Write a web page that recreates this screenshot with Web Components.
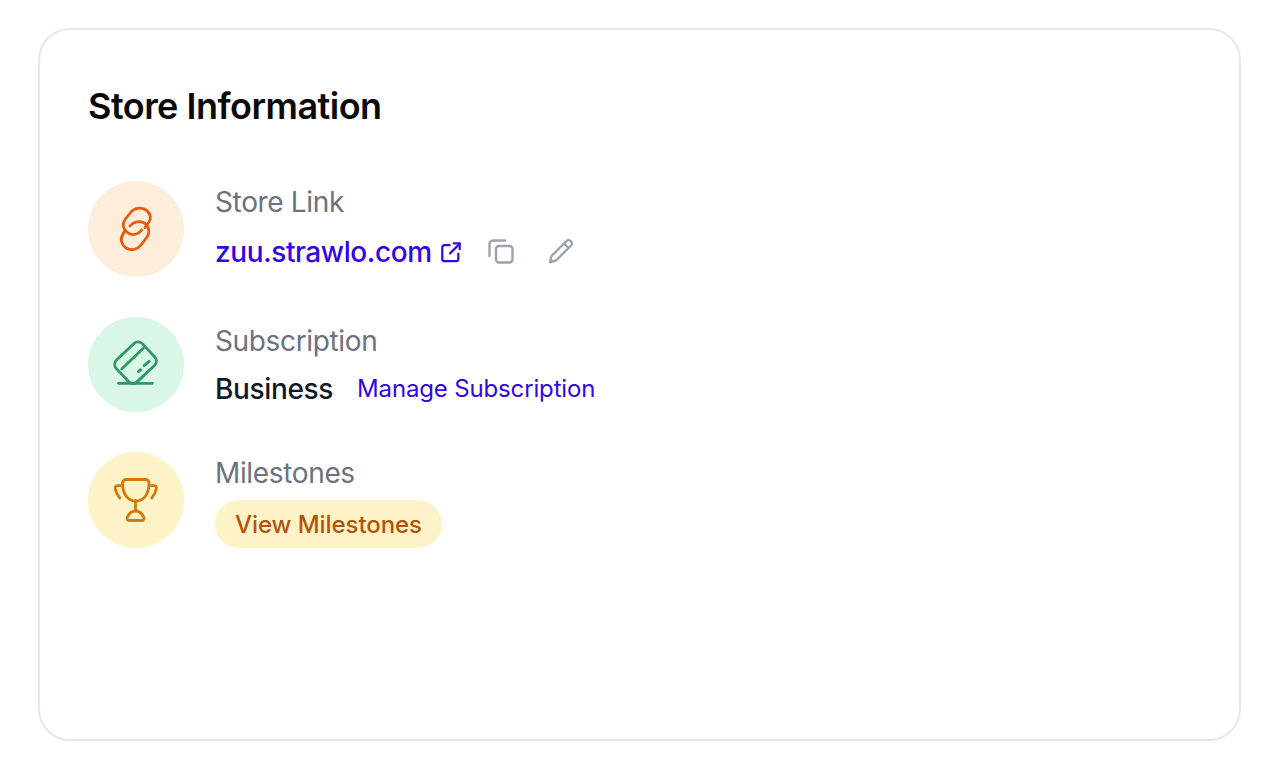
<!DOCTYPE html>
<html>
<head>
<meta charset="utf-8">
<title>Store Information</title>
<style>
  html, body { margin: 0; background: #fff; }
  body { font-family: Inter, "Liberation Sans", sans-serif; }
</style>
</head>
<body>
<store-card heading="Store Information">
  <info-row label="Store Link" tint="#fdeedc" style="--gap:9px">
    <svg slot="icon" width="48" height="48" viewBox="0 0 48 48" fill="none" stroke="#ea580c" stroke-width="2.8" stroke-linecap="round" stroke-linejoin="round">
      <path d="M29.700 25C27 29 20 31.500 15.500 27.500 11 24 10 19 13 14.500L19 7C22 3 29 1.800 34 5 38.500 8 39.500 13 37 17L33 22.500"/>
      <path d="M18 21C21 17 28 15 33 18.500 37.500 22 38 28 35 32L29 40C25.500 44.500 19 46 14 43 9.500 40 8 34 10.500 30L13 25.500"/>
    </svg>
    <a-link>zuu.strawlo.com</a-link>
    <svg width="22" height="22" viewBox="0 0 24 24" fill="none" stroke="#3207e0" stroke-width="2.400" stroke-linecap="round" stroke-linejoin="round" style="margin:-1px 0 0 8px">
      <path d="M10.500 4.500H5A2.500 2.500 0 0 0 2.500 7v12.500A2.500 2.500 0 0 0 5 22h12.500a2.500 2.500 0 0 0 2.500-2.500V14"/>
      <path d="M11 13.500 21.500 3"/><path d="M15 2.500h6.500V9"/>
    </svg>
    <svg width="28" height="28" viewBox="0 0 28 28" fill="none" stroke="#9ca3af" stroke-width="2.400" stroke-linecap="round" stroke-linejoin="round" style="margin:-3px 0 0 25px">
      <rect x="9" y="9" width="16.500" height="16.500" rx="3"/>
      <path d="M18 3.500H6A3.500 3.500 0 0 0 2.500 7v12"/>
    </svg>
    <svg width="28" height="28" viewBox="0 0 28 28" fill="none" stroke="#9ca3af" stroke-width="2.400" stroke-linecap="round" stroke-linejoin="round" style="margin:-3px 0 0 32px">
      <path d="M3 25l1.500-6L19.500 4a2.800 2.800 0 0 1 4 0l.5.500a2.800 2.800 0 0 1 0 4L9 23.500z"/>
      <path d="M17 6.500l4.500 4.500"/>
    </svg>
  </info-row>
  <info-row label="Subscription" tint="#d9f7e7" style="--top:3px;--gap:7px">
    <svg slot="icon" width="48" height="48" viewBox="0 0 48 48" fill="none" stroke="#2f9768" stroke-width="2.800" stroke-linecap="round" stroke-linejoin="round">
      <rect x="5.500" y="7.700" width="36" height="30" rx="6" transform="rotate(-43 23.500 22.700)"/>
      <path d="M9.700 29 31.300 8.300"/>
      <path d="M26.300 31.700l2.400-2M32 25.700l5.300-4.400"/>
      <path d="M6.500 43.300H40.300"/>
    </svg>
    <span class="plan">Business</span>
    <a-link small style="margin-left:24px">Manage Subscription</a-link>
  </info-row>
  <info-row label="Milestones" tint="#fef3c7" style="--gap:6px">
    <svg slot="icon" width="48" height="48" viewBox="0 0 48 48" fill="none" stroke="#d97706" stroke-width="2.800" stroke-linecap="round" stroke-linejoin="round">
      <path d="M14 3.500H33.500A3.500 3.500 0 0 1 37 7c0 5.500-1 9.500-3.500 13-2.300 3.200-5.500 5-9.700 5s-7.400-1.800-9.700-5C11.500 16.500 10.500 12.500 10.500 7A3.500 3.500 0 0 1 14 3.500z"/>
      <path d="M8.500 9.700h-3c-1.500 0-2.700 1.300-2.400 2.800.7 3.500 2.200 6.700 4.700 9.500"/>
      <path d="M39 9.700h3c1.500 0 2.700 1.300 2.400 2.800-.7 3.500-2.200 6.700-4.700 9.500"/>
      <path d="M23.500 25v10"/>
      <path d="M23.500 35c-3.500 0-6.500 2.500-8.200 6-.7 1.700 0 3.500 1.700 3.500h13c1.700 0 2.400-1.800 1.700-3.500-1.700-3.500-4.700-6-8.200-6z"/>
    </svg>
    <pill-button>View Milestones</pill-button>
  </info-row>
</store-card>

<script>
const cardTemplate = document.createElement("template");
cardTemplate.innerHTML = `
  <style>
    :host {
      display: block;
      box-sizing: border-box;
      width: 1203px;
      height: 713px;
      margin: 28px 0 0 38px;
      padding: 56px 48px;
      border: 2px solid #e5e7eb;
      border-radius: 32px;
      background: #fff;
    }
    h2 {
      margin: 0 0 55px;
      font-size: 36px;
      line-height: 40px;
      font-weight: 600;
      color: #0a0a0a;
      letter-spacing: -0.52px;
    }
    .rows {
      display: flex;
      flex-direction: column;
      gap: 40px;
    }
  </style>
  <h2></h2>
  <div class="rows"><slot></slot></div>
`;

class StoreCard extends HTMLElement {
  constructor() {
    super();
    this._shadowRoot = this.attachShadow({ mode: "open" });
    this._shadowRoot.appendChild(cardTemplate.content.cloneNode(true));
    this._shadowRoot.querySelector("h2").textContent = this.getAttribute("heading");
  }
}

const rowTemplate = document.createElement("template");
rowTemplate.innerHTML = `
  <style>
    :host {
      display: flex;
      align-items: flex-start;
      gap: 31.5px;
      height: 95.5px;
    }
    .circle {
      flex: none;
      width: 95.5px;
      height: 95.5px;
      border-radius: 50%;
      display: flex;
      align-items: center;
      justify-content: center;
    }
    .text {
      padding-top: var(--top, 0);
    }
    .label {
      font-size: 28px;
      line-height: 42px;
      letter-spacing: -0.35px;
      color: #6b7280;
    }
    .value {
      display: flex;
      align-items: center;
      margin-top: var(--gap, 8px);
      min-height: 40px;
    }
    ::slotted(.plan) {
      font-size: 28px;
      font-weight: 500;
      letter-spacing: -0.35px;
      color: #111827;
    }
  </style>
  <div class="circle"><slot name="icon"></slot></div>
  <div class="text">
    <div class="label"></div>
    <div class="value"><slot></slot></div>
  </div>
`;

class InfoRow extends HTMLElement {
  constructor() {
    super();
    this._shadowRoot = this.attachShadow({ mode: "open" });
    this._shadowRoot.appendChild(rowTemplate.content.cloneNode(true));
    this._shadowRoot.querySelector(".label").textContent = this.getAttribute("label");
    this._shadowRoot.querySelector(".circle").style.background = this.getAttribute("tint");
  }
}

const linkTemplate = document.createElement("template");
linkTemplate.innerHTML = `
  <style>
    :host {
      display: inline-block;
      font-size: 28px;
      font-weight: 500;
      letter-spacing: -0.4px;
      color: #3207e0;
      cursor: pointer;
    }
    :host([small]) {
      font-size: 24px;
      font-weight: 400;
      letter-spacing: -0.15px;
    }
  </style>
  <slot></slot>
`;

class ALink extends HTMLElement {
  constructor() {
    super();
    this.attachShadow({ mode: "open" }).appendChild(linkTemplate.content.cloneNode(true));
  }
}

const pillTemplate = document.createElement("template");
pillTemplate.innerHTML = `
  <style>
    :host {
      display: inline-block;
      padding: 0 20px;
      height: 48px;
      line-height: 50px;
      border-radius: 24px;
      background: #fef3c7;
      color: #b45309;
      font-size: 24px;
      font-weight: 500;
      letter-spacing: -0.07px;
    }
  </style>
  <slot></slot>
`;

class PillButton extends HTMLElement {
  constructor() {
    super();
    this.attachShadow({ mode: "open" }).appendChild(pillTemplate.content.cloneNode(true));
  }
}

window.customElements.define("store-card", StoreCard);
window.customElements.define("info-row", InfoRow);
window.customElements.define("a-link", ALink);
window.customElements.define("pill-button", PillButton);
</script>
</body>
</html>
